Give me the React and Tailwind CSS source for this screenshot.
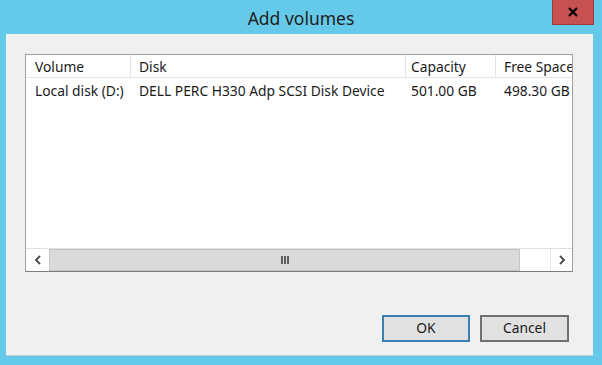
import React from "react";

const font = { fontFamily: '"Segoe UI", "Noto Sans", "Liberation Sans", sans-serif' };

const columns = [
  { label: "Volume", width: "w-[105px]", pad: "pl-[9px]" },
  { label: "Disk", width: "w-[275px]", pad: "pl-[8px]" },
  { label: "Capacity", width: "w-[90px]", pad: "pl-[5px]" },
  { label: "Free Space", width: "w-[90px]", pad: "pl-[8px]" },
];

const row = ["Local disk (D:)", "DELL PERC H330 Adp SCSI Disk Device", "501.00 GB", "498.30 GB"];

export default function App() {
  return (
    <div
      className="w-[602px] h-[365px] bg-[#65caea] flex flex-col overflow-hidden text-[13.8px] text-[#1a1a1a]"
      style={font}
    >
      {/* title bar */}
      <div className="h-[34px] flex items-start relative">
        <div className="flex-1 text-center text-[17.5px] text-[#202020] pt-[5px]">Add volumes</div>
        <button className="absolute right-[8px] top-0 w-[42px] h-[25px] bg-[#c75050] border border-[#9e3c3c] border-t-0 flex items-center justify-center">
          <svg width="12" height="10" viewBox="0 0 12 10">
            <path d="M2 1 L10 9 M10 1 L2 9" stroke="#000" strokeWidth="2.2" />
          </svg>
        </button>
      </div>

      {/* client area */}
      <div className="ml-[6px] w-[587px] h-[322px] bg-[#f0f0f0] border-b border-[#c8cfd4] flex flex-col">
        <div className="mt-[20px] ml-[19px] w-[548px] h-[218px] bg-white border border-[#a0a0a0] border-b-[#7c7c7c] flex flex-col">
          {/* header */}
          <div className="flex h-[23px] border-b border-[#e5e5e5] overflow-hidden">
            {columns.map((c) => (
              <div
                key={c.label}
                className={`${c.width} ${c.pad} shrink-0 border-r border-[#e5e5e5] pt-[2px] whitespace-nowrap`}
              >
                {c.label}
              </div>
            ))}
          </div>
          {/* row */}
          <div className="flex h-[22px] overflow-hidden">
            {row.map((v, i) => (
              <div key={i} className={`${columns[i].width} ${columns[i].pad} shrink-0 pt-[3px] whitespace-nowrap`}>
                {v}
              </div>
            ))}
          </div>
          <div className="flex-1" />
          {/* horizontal scrollbar */}
          <div className="h-[23px] flex border-t border-[#e0e0e0]">
            <div className="w-[23px] flex items-center justify-center bg-white">
              <svg width="8" height="10" viewBox="0 0 8 10">
                <path d="M6 1 L2 5 L6 9" stroke="#505050" strokeWidth="2" fill="none" />
              </svg>
            </div>
            <div className="w-[471px] bg-[#dadada] border border-[#c4c4c4] flex items-center justify-center gap-[1px]">
              <div className="w-[2px] h-[8px] bg-[#606060]" />
              <div className="w-[2px] h-[8px] bg-[#606060]" />
              <div className="w-[2px] h-[8px] bg-[#606060]" />
            </div>
            <div className="flex-1 bg-white" />
            <div className="w-[22px] flex items-center justify-center bg-white border-l border-[#e8e8e8]">
              <svg width="8" height="10" viewBox="0 0 8 10">
                <path d="M2 1 L6 5 L2 9" stroke="#505050" strokeWidth="2" fill="none" />
              </svg>
            </div>
          </div>
        </div>

        {/* buttons */}
        <div className="mt-[43px] mr-[24px] flex justify-end gap-[10px]">
          <button className="w-[88px] h-[27px] bg-[#e1e1e1] border-2 border-[#3c7fb1] text-[13.8px] text-[#1a1a1a]">
            OK
          </button>
          <button className="w-[89px] h-[27px] bg-[#e1e1e1] border-2 border-[#707070] text-[13.8px] text-[#1a1a1a]">
            Cancel
          </button>
        </div>
      </div>
    </div>
  );
}
